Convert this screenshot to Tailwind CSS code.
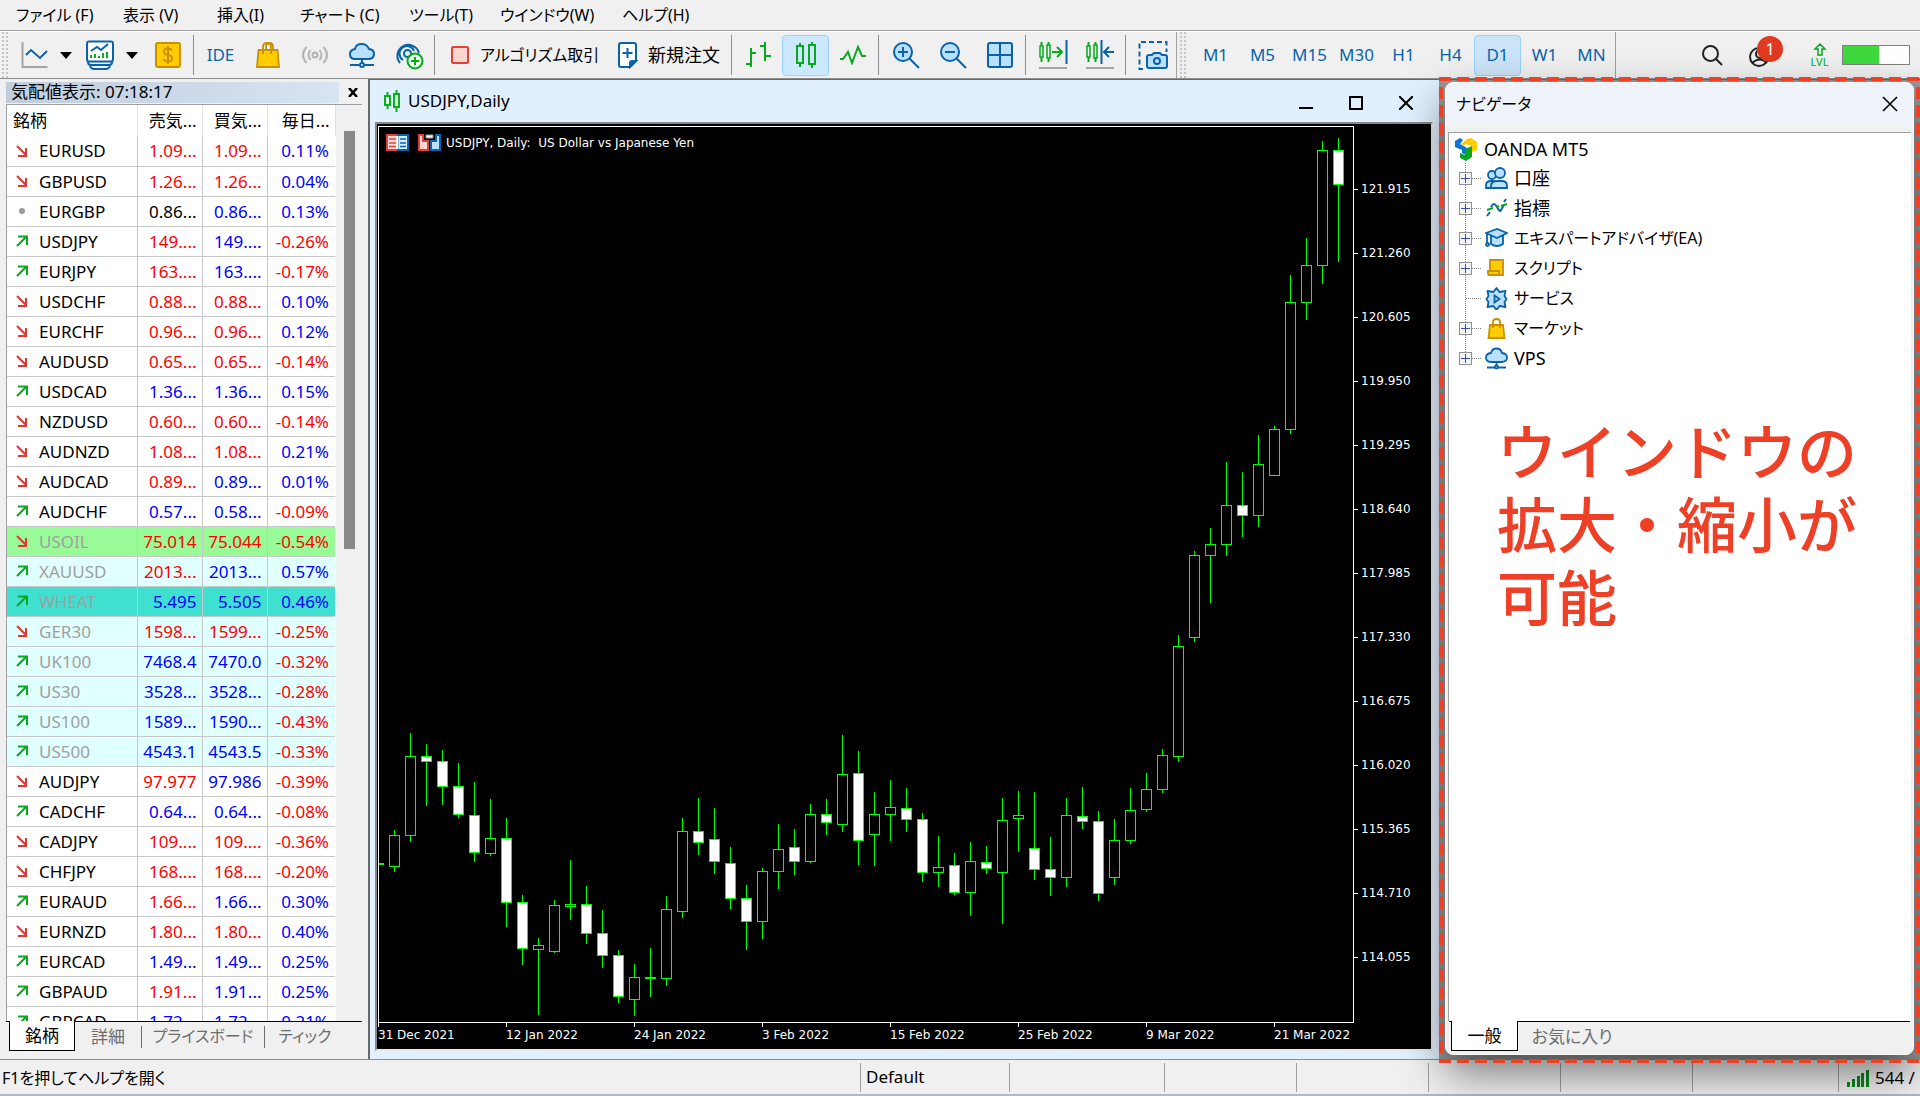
<!DOCTYPE html>
<html lang="ja">
<head>
<meta charset="utf-8">
<title>USDJPY,Daily</title>
<script src="https://cdn.jsdelivr.net/npm/@tailwindcss/browser@4"></script>
</head>
<body class="h-screen overflow-hidden flex flex-col bg-[#f0f0f0] text-black text-[17px] leading-6 font-['Noto_Sans','Noto_Sans_CJK_JP',sans-serif] [font-feature-settings:'palt']">

<!-- Menu bar -->
<nav class="h-[31px] shrink-0 flex items-center pl-4 gap-8 border-b border-[#a0a0a0] whitespace-nowrap text-[16px]">
  <a href="#" class="w-[75px]">ファイル (F)</a>
  <a href="#" class="w-[62px]">表示 (V)</a>
  <a href="#" class="w-[51px]">挿入(I)</a>
  <a href="#" class="w-[77px]">チャート (C)</a>
  <a href="#" class="w-[59px]">ツール(T)</a>
  <a href="#" class="w-[90px]">ウインドウ(W)</a>
  <a href="#">ヘルプ(H)</a>
</nav>

<!-- Toolbar -->
<div class="h-[47px] shrink-0 flex items-center border-t border-white whitespace-nowrap text-[#0a63a8]">
  <div class="w-[11px] h-[46px] shrink-0 flex gap-[2px] pl-[2px]"><i class="w-[2px] bg-[repeating-linear-gradient(#c4c4c4_0_2px,transparent_2px_4px)]"></i><i class="w-[2px] bg-[repeating-linear-gradient(#c4c4c4_0_2px,transparent_2px_4px)]"></i></div>
  <button aria-label="チャート" class="w-[47px] h-[41px] grid place-items-center"><svg width="28" height="28" fill="none"><path d="M1.500 1v25h25" stroke="#a3a3a3" stroke-width="2"/><path d="M5 14l5-5 9 8 7-7" stroke="#0a63a8" stroke-width="2"/></svg></button>
  <button aria-label="チャートメニュー" class="w-[18px] h-[41px] pr-[3px] grid place-items-center"><svg width="12" height="7"><path d="M0 0h12l-6 7z"/></svg></button>
  <button aria-label="プロファイル" class="w-[47px] h-[41px] grid place-items-center"><svg width="30" height="30" fill="none" stroke="#0a63a8" stroke-width="2"><rect x="2" y="1.500" width="26" height="20" rx="2" fill="#fff"/><path d="M3 22q0 3 3 3h18q3 0 3-3M5 26q1 3 4 3h12q3 0 4-3"/><path d="M6 11l6-4 4 3 7-6"/><path d="M6 18v-3M10 18v-4M14 18v-2M18 18v-5M22 18v-6" stroke="#09b020" stroke-width="2"/></svg></button>
  <button aria-label="プロファイルメニュー" class="w-[21px] h-[41px] pr-[4px] grid place-items-center"><svg width="12" height="7"><path d="M0 0h12l-6 7z"/></svg></button>
  <button aria-label="気配値表示" class="w-[47px] h-[41px] grid place-items-center"><svg width="28" height="28" fill="none" stroke="#c99000" stroke-width="2"><rect x="2" y="2" width="24" height="24" rx="2" fill="#ffcc00"/><path d="M18 9.500q-1-2-4-2-4 0-4 3t4 3.500q4 .5 4 3.500t-4 3q-3.500 0-4.500-2.500M14 5v18"/></svg></button>
  <i class="ml-[2px] mr-[3px] w-px h-[40px] bg-[#8f8f8f]"></i>
  <button class="w-[47px] h-[41px]">IDE</button>
  <button aria-label="マーケット" class="w-[47px] h-[41px] grid place-items-center"><svg width="26" height="28" fill="#ffcc00" stroke="#c99000" stroke-width="1.800"><path d="M3.500 9h19l1.500 17H2z"/><path d="M8 13V6q0-4 4-4t4 4v7M11 9V6q0-4 3.500-4T18 6v3" fill="none"/></svg></button>
  <button aria-label="シグナル" class="w-[47px] h-[41px] grid place-items-center"><svg width="28" height="20" fill="none" stroke="#b4b4b4" stroke-width="2"><circle cx="14" cy="10" r="2.500"/><path d="M9.500 5q-4 5 0 10M18.500 5q4 5 0 10M5.500 2q-7 8 0 16M22.500 2q7 8 0 16"/></svg></button>
  <button aria-label="VPS" class="w-[47px] h-[41px] grid place-items-center"><svg width="28" height="26" fill="none" stroke="#0a63a8" stroke-width="2"><path d="M7 17q-5 0-5-5 0-4 5-5 1-5 6.500-5T21 7q5 .5 5 5t-5 5z" fill="#b9e1ff"/><path d="M14 17v5M2 23h9M17 23h9"/><circle cx="14" cy="23" r="2"/></svg></button>
  <button aria-label="コピー" class="w-[47px] h-[41px] grid place-items-center"><svg width="30" height="30" fill="none" stroke="#0a63a8" stroke-width="2"><path d="M6 23A11 11 0 1 1 25 13M9 20A7.500 7.500 0 1 1 20 11"/><circle cx="13.500" cy="13.500" r="3.500"/><circle cx="21" cy="21" r="7.500" fill="#eaffea" stroke="#09a81e"/><path d="M21 17v8M17 21h8" stroke="#09a81e"/></svg></button>
  <i class="ml-[2px] mr-[3px] w-px h-[40px] bg-[#8f8f8f]"></i>
  <button class="w-[167px] h-[41px] pl-[13px] flex items-center gap-[11px] text-black text-[16px]"><svg class="shrink-0" width="18" height="18"><rect x="1" y="1" width="16" height="16" rx="1" fill="#ffd5cf" stroke="#e0423a" stroke-width="2"/></svg>アルゴリズム取引</button>
  <button class="w-[124px] h-[41px] pl-[12px] flex items-center gap-[10px] text-black text-[18px]"><svg class="shrink-0" width="21" height="28" fill="#fff" stroke="#0a63a8" stroke-width="2"><path d="M2 4q0-2 2-2h13q2 0 2 2v16l-6 6H4q-2 0-2-2z"/><path d="M10.500 7v10M5.500 12h10"/><path d="M13 26v-4q0-2 2-2h4z" fill="#0a63a8"/></svg>新規注文</button>
  <i class="ml-[2px] mr-[3px] w-px h-[40px] bg-[#8f8f8f]"></i>
  <button aria-label="バーチャート" class="w-[47px] h-[41px] grid place-items-center"><svg width="28" height="28" fill="none" stroke="#09a81e" stroke-width="2"><path d="M6 7v19M1 23h5M6 12h5M20 1v19M15 5h5M20 15h6"/></svg></button>
  <button aria-label="ローソク足" aria-pressed="true" class="w-[47px] h-[41px] grid place-items-center bg-[#cce8ff] border border-[#99d1ff] rounded-sm"><svg width="24" height="28" fill="none" stroke="#09a81e" stroke-width="2"><path d="M6 2v3M6 22v4M18 1v3M18 23v4"/><rect x="3" y="5" width="6" height="17"/><rect x="15" y="4" width="6" height="19"/></svg></button>
  <button aria-label="ライン" class="w-[47px] h-[41px] grid place-items-center"><svg width="28" height="20" fill="none" stroke="#09a81e" stroke-width="2"><path d="M1 14h3l5-7 4 11 6-16 4 9h4"/></svg></button>
  <i class="ml-[2px] mr-[3px] w-px h-[40px] bg-[#8f8f8f]"></i>
  <button aria-label="ズームイン" class="w-[47px] h-[41px] grid place-items-center"><svg width="28" height="28" fill="none" stroke="#0a63a8" stroke-width="2"><circle cx="11" cy="11" r="9" fill="#b9e1ff"/><path d="M17.500 17.500L27 27M6 11h10M11 6v10"/></svg></button>
  <button aria-label="ズームアウト" class="w-[47px] h-[41px] grid place-items-center"><svg width="28" height="28" fill="none" stroke="#0a63a8" stroke-width="2"><circle cx="11" cy="11" r="9" fill="#b9e1ff"/><path d="M17.500 17.500L27 27M6 11h10"/></svg></button>
  <button aria-label="タイル表示" class="w-[47px] h-[41px] grid place-items-center"><svg width="28" height="28" fill="#b9e1ff" stroke="#0a63a8" stroke-width="2"><rect x="2" y="2" width="24" height="24" rx="2"/><path d="M14 2v24M2 14h24"/></svg></button>
  <i class="ml-[2px] mr-[3px] w-px h-[40px] bg-[#8f8f8f]"></i>
  <button aria-label="自動スクロール" class="w-[47px] h-[41px] grid place-items-center"><svg width="30" height="30" fill="none" stroke="#09a81e" stroke-width="2"><path d="M3.500 2v20M10.500 2v20M14 12h9M19 7l5 5-5 5"/><path d="M2 6h3v11H2zM9 5h3v13H9z" fill="#f0f0f0" stroke-width="1.500"/><path d="M28.500 0v24" stroke="#0a63a8"/><path d="M1 28h28" stroke="#a3a3a3"/></svg></button>
  <button aria-label="チャートシフト" class="w-[47px] h-[41px] grid place-items-center"><svg width="30" height="30" fill="none" stroke="#09a81e" stroke-width="2"><path d="M3.500 2v20M10.500 2v20"/><path d="M2 6h3v11H2zM9 5h3v13H9z" fill="#f0f0f0" stroke-width="1.500"/><path d="M16.500 0v24M29 12h-9M24 7l-5 5 5 5" stroke="#0a63a8"/><path d="M1 28h28" stroke="#a3a3a3"/></svg></button>
  <i class="ml-[2px] mr-[3px] w-px h-[40px] bg-[#8f8f8f]"></i>
  <button aria-label="スクリーンショット" class="w-[47px] h-[41px] grid place-items-center"><svg width="30" height="30" fill="none" stroke="#0a63a8" stroke-width="2"><path d="M5 29H1.500V2h27v10" stroke-dasharray="5 3"/><path d="M9 17q0-2 2-2h3l2-2h6l2 2h3q2 0 2 2v9q0 2-2 2H11q-2 0-2-2z" fill="#b9e1ff"/><circle cx="19" cy="21" r="3"/></svg></button>
  <i class="w-px h-full bg-[#a0a0a0] mr-[3px]"></i>
  <div class="w-[12px] h-[46px] shrink-0 flex gap-[2px]"><i class="w-[2px] bg-[repeating-linear-gradient(#c4c4c4_0_2px,transparent_2px_4px)]"></i><i class="w-[2px] bg-[repeating-linear-gradient(#c4c4c4_0_2px,transparent_2px_4px)]"></i></div>
  <button class="w-[47px] h-[41px]">M1</button>
  <button class="w-[47px] h-[41px]">M5</button>
  <button class="w-[47px] h-[41px]">M15</button>
  <button class="w-[47px] h-[41px]">M30</button>
  <button class="w-[47px] h-[41px]">H1</button>
  <button class="w-[47px] h-[41px]">H4</button>
  <button aria-pressed="true" class="w-[47px] h-[41px] bg-[#cce4f7] border border-[#99d1ff] rounded-sm">D1</button>
  <button class="w-[47px] h-[41px]">W1</button>
  <button class="w-[47px] h-[41px]">MN</button>
  <i class="w-px h-full bg-[#a0a0a0]"></i>
  <div class="ml-auto flex items-center pr-[10px]">
    <button aria-label="検索" class="mr-[26px]"><svg width="22" height="22" fill="none" stroke="#222" stroke-width="2"><circle cx="9.500" cy="9.500" r="7.500"/><path d="M15 15l6 6"/></svg></button>
    <button aria-label="通知 1件" class="relative w-[34px] h-[30px]"><svg class="mt-1" width="22" height="22" fill="none" stroke="#222" stroke-width="2"><circle cx="10" cy="11" r="9"/><circle cx="11" cy="8" r="4"/><path d="M3 17q8-7 15 0"/></svg><span class="absolute -top-[4px] left-[8px] size-[26px] rounded-full bg-[#e03a20] text-white text-[17px] leading-[26px] text-center">1</span></button>
    <div class="w-[19px] ml-[27px] mr-[13px] flex flex-col items-center text-[#09a81e] text-[11px] leading-3"><svg width="14" height="13" fill="none" stroke="#09a81e" stroke-width="1.500"><path d="M7 1l5 5H9v6H5V6H2z"/></svg>LVL</div>
    <div class="w-[68px] h-[20px] bg-white border border-[#808080]"><div class="w-[36px] h-full bg-[#3fd93f]"></div></div>
  </div>
</div>

<!-- Work area -->
<main class="flex-1 min-h-0 flex border-y border-[#8c8c8c]">
  <!-- Market watch -->
  <section class="w-[368px] shrink-0 flex flex-col pl-[6px] pr-[6px] pt-[3px] pb-[5px]">
    <header class="h-[21px] flex items-center justify-between mb-px">
      <h2 class="w-[333px] h-full pl-[5px] leading-[19px] text-[17px] bg-linear-to-r from-[#bfcddd] to-[#d7e4f2] whitespace-nowrap">気配値表示: 07:18:17</h2>
      <button aria-label="閉じる" class="mr-[3px]"><svg width="11" height="9" stroke="#000" stroke-width="2.500"><path d="M1 0l8 9M9 0L1 9"/></svg></button>
    </header>
    <div class="flex-1 min-h-0 overflow-hidden border-t border-l border-[#a0a0a0] flex">
      <table class="w-[328px] h-fit table-fixed border-collapse bg-white">
        <colgroup><col class="w-[130px]"><col class="w-[65px]"><col class="w-[65px]"><col class="w-[68px]"></colgroup>
        <thead><tr class="h-[31px] *:border-r *:border-[#e2e2e2] *:font-normal *:leading-[30px] *:whitespace-nowrap"><th class="text-left pl-[6px]">銘柄</th><th class="text-right pr-[5px]">売気...</th><th class="text-right pr-[5px]">買気...</th><th class="text-right pr-[5px]">毎日...</th></tr></thead>
        <tbody id="quotes"></tbody>
      </table>
      <div class="flex-1 pl-[8px] pt-[26px]"><div class="w-[11px] h-[418px] bg-[#888]"></div></div>
    </div>
    <div class="h-[33px] shrink-0 flex border-t border-black border-b-0 pl-[3px] text-[#6d6d6d] leading-[29px] whitespace-nowrap">
      <button class="w-[66px] h-[30px] -mt-px bg-white border border-t-0 border-black text-black">銘柄</button>
      <button class="w-[66px] h-[29px]">詳細</button>
      <i class="w-px h-[22px] mt-1 bg-[#6d6d6d]"></i>
      <button class="w-[122px] h-[29px] text-[16px]">プライスボード</button>
      <i class="w-px h-[22px] mt-1 bg-[#6d6d6d]"></i>
      <button class="w-[80px] h-[29px] text-[16px]">ティック</button>
    </div>
  </section>

  <!-- Chart window -->
  <section class="flex-1 min-w-0 flex flex-col bg-[#e1f0ff] border-l-2 border-t border-[#696969] pl-[5px] pr-[6px] pb-[8px]">
    <header class="h-[42px] shrink-0 flex items-center pl-[8px]">
      <svg width="18" height="22" fill="#e0ffe0" stroke="#09b020" stroke-width="2"><path d="M4.500 2v17M13.500 0v22"/><rect x="2" y="6" width="5" height="9"/><rect x="11" y="4" width="5" height="13"/></svg>
      <h1 class="pl-[7px] flex-1">USDJPY,Daily</h1>
      <button aria-label="最小化" class="w-[50px] grid place-items-center"><svg width="14" height="16"><path d="M0 15h14" stroke="#000" stroke-width="2"/></svg></button>
      <button aria-label="最大化" class="w-[50px] grid place-items-center"><svg class="mt-1" width="14" height="14"><path d="M1 1h12v12H1z" fill="none" stroke="#000" stroke-width="2"/></svg></button>
      <button aria-label="閉じる" class="w-[50px] mr-[2px] grid place-items-center"><svg class="mt-1" width="14" height="14"><path d="M0 0l14 14M14 0L0 14" stroke="#000" stroke-width="2"/></svg></button>
    </header>
    <div class="flex-1 min-h-0 bg-black border-t-2 border-l-2 border-[#888] border-r-2 border-r-[#e8e8e8] border-b-2 border-b-[#e8e8e8] pt-[2px] pl-px grid grid-cols-[minmax(0,1fr)_77px] grid-rows-[minmax(0,1fr)_26px] font-['DejaVu_Sans',sans-serif] text-[12px] leading-4 text-white">
      <div class="relative border border-white overflow-hidden">
        <svg id="candles" class="w-full h-full" shape-rendering="crispEdges" stroke="#00ff00"></svg>
        <div class="absolute left-[7px] top-[7px] flex items-center whitespace-pre">
          <svg width="23" height="17"><path d="M1 1h11v15H1z" fill="#ffdcd8" stroke="#e0423a" stroke-width="2"/><path d="M12 1h10v15H12z" fill="#d6edff" stroke="#0a63a8" stroke-width="2"/><path d="M3 5h7M3 9h7M3 12.500h7" stroke="#e0423a" stroke-width="1.500"/><path d="M14 5h6M14 9h6M14 12.500h6" stroke="#0a63a8" stroke-width="1.500"/><path d="M11.500 2v13" stroke="#fff" stroke-width="2"/></svg>
          <svg class="ml-[9px]" width="23" height="17"><path d="M1 1h4v6h5v9H1z" fill="#ffd5cf" stroke="#e0423a" stroke-width="2"/><path d="M22 1h-4v6h-5v9h9z" fill="#b9e1ff" stroke="#0a63a8" stroke-width="2"/><path d="M8 1h7v3H8z" fill="#fff" stroke="#999"/></svg>
          <span class="ml-[5px]">USDJPY, Daily:  US Dollar vs Japanese Yen</span>
        </div>
      </div>
      <ul id="prices" class="pt-[31px]"></ul>
      <ul id="dates" class="col-span-2 flex overflow-hidden"></ul>
    </div>
  </section>

  <!-- Navigator -->
  <section class="relative w-[481px] shrink-0 bg-[#9a9a9a] border-t border-[#696969] flex flex-col pl-[6px] pr-[6px] pt-[2px] pb-[4px]">
    <div class="flex-1 min-h-0 flex flex-col bg-[#f0f0f0] rounded-lg border border-[#f8f8f8] overflow-hidden shadow-[0_18px_44px_rgba(0,0,0,0.5)] z-10">
      <header class="h-[43px] shrink-0 flex items-center justify-between pl-[10px] pr-[15px] pb-[2px] bg-[#eef3fa]">
        <h2 class="text-[16px]">ナビゲータ</h2>
        <button aria-label="閉じる"><svg width="16" height="16"><path d="M1 1l14 14M15 1L1 15" stroke="#000" stroke-width="1.600"/></svg></button>
      </header>
      <div class="flex-1 min-h-0 mt-[6px] ml-[2px] mr-[2px] bg-white border-t border-l border-[#a0a0a0] pl-[6px]">
        <div class="h-[30px] flex items-center gap-[7px] pt-[2px] text-[18px]"><svg width="22" height="23"><path d="M0 3l5-3 3 2-3 4 7 4-1 7-4-2v-3L0 9z" fill="#0a72d8"/><path d="M6 6l6-5 4-1 6 4v8l-5 2V8l-6-2-2 2z" fill="#ffcc00"/><path d="M17 8v11l-6 4-6-3v-5l5 2v-6z" fill="#09a81e"/></svg>OANDA MT5</div>
        <ul id="tree" class="whitespace-nowrap"></ul>
        <p class="pl-[42px] pt-[39px] text-[60px] leading-[73px] font-medium text-[#ee4026] [font-feature-settings:normal] font-['Noto_Sans_CJK_JP',sans-serif]">ウインドウの<br>拡大・縮小が<br>可能</p>
      </div>
      <div class="h-[33px] shrink-0 mx-[3px] flex border-t border-black pl-[2px] text-[#6d6d6d] leading-[29px] whitespace-nowrap">
        <button class="w-[67px] h-[30px] -mt-px bg-white border border-t-0 border-black text-black">一般</button>
        <button class="w-[108px] h-[29px]">お気に入り</button>
      </div>
    </div>
    <svg class="absolute -top-[4px] left-0 w-full h-[calc(100%+8px)] z-20 pointer-events-none" stroke="#ee4026" stroke-width="4" stroke-dasharray="12 6">
      <line x1="0" y1="3" x2="100%" y2="3"/>
      <line x1="2" y1="11" x2="2" y2="100%"/>
      <svg x="100%" overflow="visible"><line x1="-2" y1="11" x2="-2" y2="980"/></svg>
      <svg y="100%" overflow="visible"><line x1="0" y1="-2" x2="482" y2="-2"/></svg>
    </svg>
  </section>
</main>

<!-- Status bar -->
<footer class="h-[36px] shrink-0 flex items-center border-b-2 border-[#b0b8c4] whitespace-nowrap">
  <div class="flex-1 pl-[2px] pt-[2px] text-[16px]">F1を押してヘルプを開く</div>
  <div class="w-[149px] h-[29px] border-l border-[#a0a0a0] pl-[5px] pt-[2px]">Default</div>
  <div class="w-[155px] h-[29px] border-l border-[#a0a0a0]"></div>
  <div class="w-[132px] h-[29px] border-l border-[#a0a0a0]"></div>
  <div class="w-[132px] h-[29px] border-l border-[#a0a0a0]"></div>
  <div class="w-[132px] h-[29px] border-l border-[#a0a0a0]"></div>
  <div class="w-[132px] h-[29px] border-l border-[#a0a0a0]"></div>
  <div class="w-[146px] h-[29px] border-l border-[#a0a0a0]"></div>
  <div class="w-[82px] h-[29px] border-l border-[#a0a0a0] flex items-center gap-[6px] pl-[8px] pt-[2px]"><svg class="shrink-0" width="22" height="17" fill="#078a1c"><path d="M0 12h3v5H0zM5 9h3v8H5zM10 6h3v11h-3zM14 3h3v14h-3zM19 0h3v17h-3z"/></svg>544 /</div>
</footer>

<script>
// direction, symbol, bid, bid colour, ask, ask colour, daily change
const quotes = `d EURUSD 1.09... r 1.09... r 0.11
d GBPUSD 1.26... r 1.26... r 0.04
n EURGBP 0.86... k 0.86... b 0.13
u USDJPY 149.... r 149.... b -0.26
u EURJPY 163.... r 163.... b -0.17
d USDCHF 0.88... r 0.88... r 0.10
d EURCHF 0.96... r 0.96... r 0.12
d AUDUSD 0.65... r 0.65... r -0.14
u USDCAD 1.36... b 1.36... b 0.15
d NZDUSD 0.60... r 0.60... r -0.14
d AUDNZD 1.08... r 1.08... r 0.21
d AUDCAD 0.89... r 0.89... b 0.01
u AUDCHF 0.57... b 0.58... b -0.09
d USOIL 75.014 r 75.044 r -0.54
u XAUUSD 2013... r 2013... b 0.57
u WHEAT 5.495 b 5.505 b 0.46
d GER30 1598... r 1599... r -0.25
u UK100 7468.4 b 7470.0 b -0.32
u US30 3528... b 3528... b -0.28
u US100 1589... b 1590... b -0.43
u US500 4543.1 b 4543.5 b -0.33
d AUDJPY 97.977 r 97.986 b -0.39
u CADCHF 0.64... b 0.64... b -0.08
d CADJPY 109.... r 109.... r -0.36
d CHFJPY 168.... r 168.... r -0.20
u EURAUD 1.66... r 1.66... b 0.30
d EURNZD 1.80... r 1.80... r 0.40
u EURCAD 1.49... b 1.49... b 0.25
u GBPAUD 1.91... r 1.91... b 0.25
u GBPCAD 1.72... b 1.72... b 0.21`.split('\n').map(l => l.split(' '));
const ink = { r: 'text-[#ff0000]', b: 'text-[#0000ff]', k: 'text-black' };
const marks = {
  d: '<svg width="12" height="12" fill="none" stroke="#d93a34" stroke-width="2"><path d="M1 1l9 9M10 3v8H2"/></svg>',
  u: '<svg width="12" height="12" fill="none" stroke="#09a81e" stroke-width="2"><path d="M1 11l9-9M2 1.500h9V10"/></svg>',
  n: '<svg width="12" height="12" fill="#9a9a9a"><circle cx="6" cy="6" r="3"/></svg>'
};
const shade = i => i === 13 ? 'bg-[#98fb98]' : i === 15 ? 'bg-[#40e0d0]' : i > 13 && i < 21 ? 'bg-[#e0ffff]' : 'bg-white';
document.getElementById('quotes').innerHTML = quotes.map(([m, s, bid, bc, ask, ac, ch], i) =>
  `<tr class="h-[30px] border-b border-[#c8c8c8] leading-[29px] ${shade(i)}">
    <td class="border-r border-[#c8c8c8]"><div class="flex items-center pl-[9px] gap-[11px] ${i > 12 && i < 21 ? 'text-[#a0a0a0]' : ''}">${marks[m]}${s}</div></td>
    <td class="border-r border-[#c8c8c8] text-right pr-[5px] ${ink[bc]}">${bid}</td>
    <td class="border-r border-[#c8c8c8] text-right pr-[5px] ${ink[ac]}">${ask}</td>
    <td class="text-right pr-[6px] ${ch[0] === '-' ? ink.r : ink.b}">${ch}%</td></tr>`).join('');

// high, body top, body bottom, low, 1 = falling
const bars = [[864,863,864,864,0],[830,835,866,872,0],[733,756,835,842,0],[744,756,761,806,1],[750,761,786,805,1],[763,786,814,818,1],[782,815,852,862,1],[799,838,853,856,0],[818,838,902,927,1],[895,902,948,965,1],[938,945,949,1015,0],[900,905,951,953,0],[860,904,906,920,0],[886,904,933,944,1],[910,933,955,968,1],[950,955,996,1003,1],[964,977,999,1016,0],[948,977,978,997,0],[896,909,978,986,0],[818,831,911,918,0],[798,831,842,855,1],[808,839,861,874,1],[847,863,898,909,1],[885,898,921,950,1],[868,871,921,939,0],[824,849,871,889,0],[829,847,861,875,1],[804,814,861,863,0],[799,814,822,835,1],[735,774,824,832,0],[751,773,840,865,1],[792,814,834,866,0],[780,807,814,841,0],[788,808,819,832,1],[813,819,872,882,1],[836,867,872,887,0],[853,865,892,895,1],[842,861,892,916,0],[846,862,868,874,1],[798,820,872,924,0],[791,815,818,852,0],[792,848,869,880,1],[837,869,877,896,1],[798,815,877,887,0],[787,816,821,829,1],[811,821,893,901,1],[819,840,877,885,0],[788,810,840,844,0],[773,789,809,812,0],[749,755,789,793,0],[635,646,756,762,0],[551,555,637,642,0],[528,544,555,603,0],[462,505,544,556,0],[472,505,515,537,1],[435,464,515,527,0],[426,429,475,475,0],[275,302,429,434,0],[238,265,302,320,0],[141,150,265,284,0],[138,150,184,262,1]];
const top0 = 127;
document.getElementById('candles').innerHTML = bars.map(([h, a, b, l, f], k) => {
  const x = 16 * k - 1 + 0.5;
  return `<path d="M${x} ${h - top0}V${l - top0}"/><rect x="${x - 5}" y="${a - top0 + 0.5}" width="10" height="${b - a}" fill="${f ? '#fff' : '#000'}"/>`;
}).join('');

document.getElementById('prices').innerHTML = Array.from({ length: 13 }, (_, i) =>
  `<li class="h-[64px] flex items-center gap-[3px]"><i class="w-1 h-px bg-white"></i>${(121.915 - 0.655 * i).toFixed(3)}</li>`).join('');
document.getElementById('dates').innerHTML = ['31 Dec 2021', '12 Jan 2022', '24 Jan 2022', '3 Feb 2022', '15 Feb 2022', '25 Feb 2022', '9 Mar 2022', '21 Mar 2022'].map(d =>
  `<li class="w-[128px] shrink-0"><i class="block w-px h-1 bg-white"></i>${d}</li>`).join('');

const B = 'fill="#b9e1ff" stroke="#0a63a8" stroke-width="1.8"';
const tree = [
  ['口座', 1, `<g ${B}><circle cx="7" cy="8" r="4"/><path d="M1 21v-3q0-4 5-4h3v7z"/><circle cx="15" cy="6" r="5"/><path d="M6 21v-2q0-5 6-5h5q5 0 5 5v2z"/></g>`],
  ['指標', 1, '<g fill="none" stroke-width="2"><path d="M2 19l3-4M6 10q3-6 6 0t4 3l3-5M19 5l2-3" stroke="#0a63a8"/><path d="M2 13l6-2M11 10l3-1M16 9l6-2" stroke="#09a81e"/></g>'],
  ['エキスパートアドバイザ(EA)', 1, `<g ${B}><path d="M6 9v8q6 4 12 0V9z"/><path d="M1 6l11-4 10 4-10 5z"/><path d="M2 7v9" fill="none"/><circle cx="2.500" cy="17.500" r="1.500"/></g>`],
  ['スクリプト', 1, '<g fill="#ffcc00" stroke="#c99000" stroke-width="1.800"><path d="M5 3h13v15H5z"/><path d="M3 14h11v2q0 2 2 2H4q-1 0-1-2z"/></g>'],
  ['サービス', 0, `<g ${B}><path d="M11.500 1l3 4 6-1-1 5 2 3-2 3 1 5-6-1-3 4-3-4-6 1 1-5-2-3 2-3-1-5 6 1z" stroke-linejoin="round"/><path d="M9.500 8.500v7l5-3.500z"/></g>`],
  ['マーケット', 1, '<g fill="#ffcc00" stroke="#c99000" stroke-width="1.800"><path d="M5 8h13l1.500 13h-16z"/><path d="M8 11V5q0-3 3.500-3T15 5v6" fill="none"/></g>'],
  ['VPS', 1, `<g ${B}><path d="M6 15q-5 0-5-4.500 0-4 5-4.500 1-4.500 5.500-4.500T17 6q5 .5 5 4.500T17 15z"/><path d="M11.500 15v4M2 20.500h19"/><circle cx="11.500" cy="20" r="1.500"/></g>`]
];
document.getElementById('tree').innerHTML = tree.map(([t, plus, icon], i) =>
  `<li class="h-[30px] flex items-center">
    <svg width="30" height="30" class="shrink-0" shape-rendering="crispEdges" fill="none"><path d="M10.500 0V${i === 6 ? 15 : 30}M10.500 15.500H27" stroke="#808080" stroke-dasharray="1 1"/>${plus ? '<rect x="4.500" y="9.500" width="12" height="12" fill="#f4f4f4" stroke="#919191"/><path d="M6 15.500h9M10.500 11v9" stroke="#3a50a0"/>' : ''}</svg>
    <svg width="23" height="23" class="shrink-0 mr-[6px]">${icon}</svg>
    <span class="${i < 2 || i === 6 ? 'text-[18px]' : 'text-[16px]'}">${t}</span></li>`).join('');
</script>
</body>
</html>
